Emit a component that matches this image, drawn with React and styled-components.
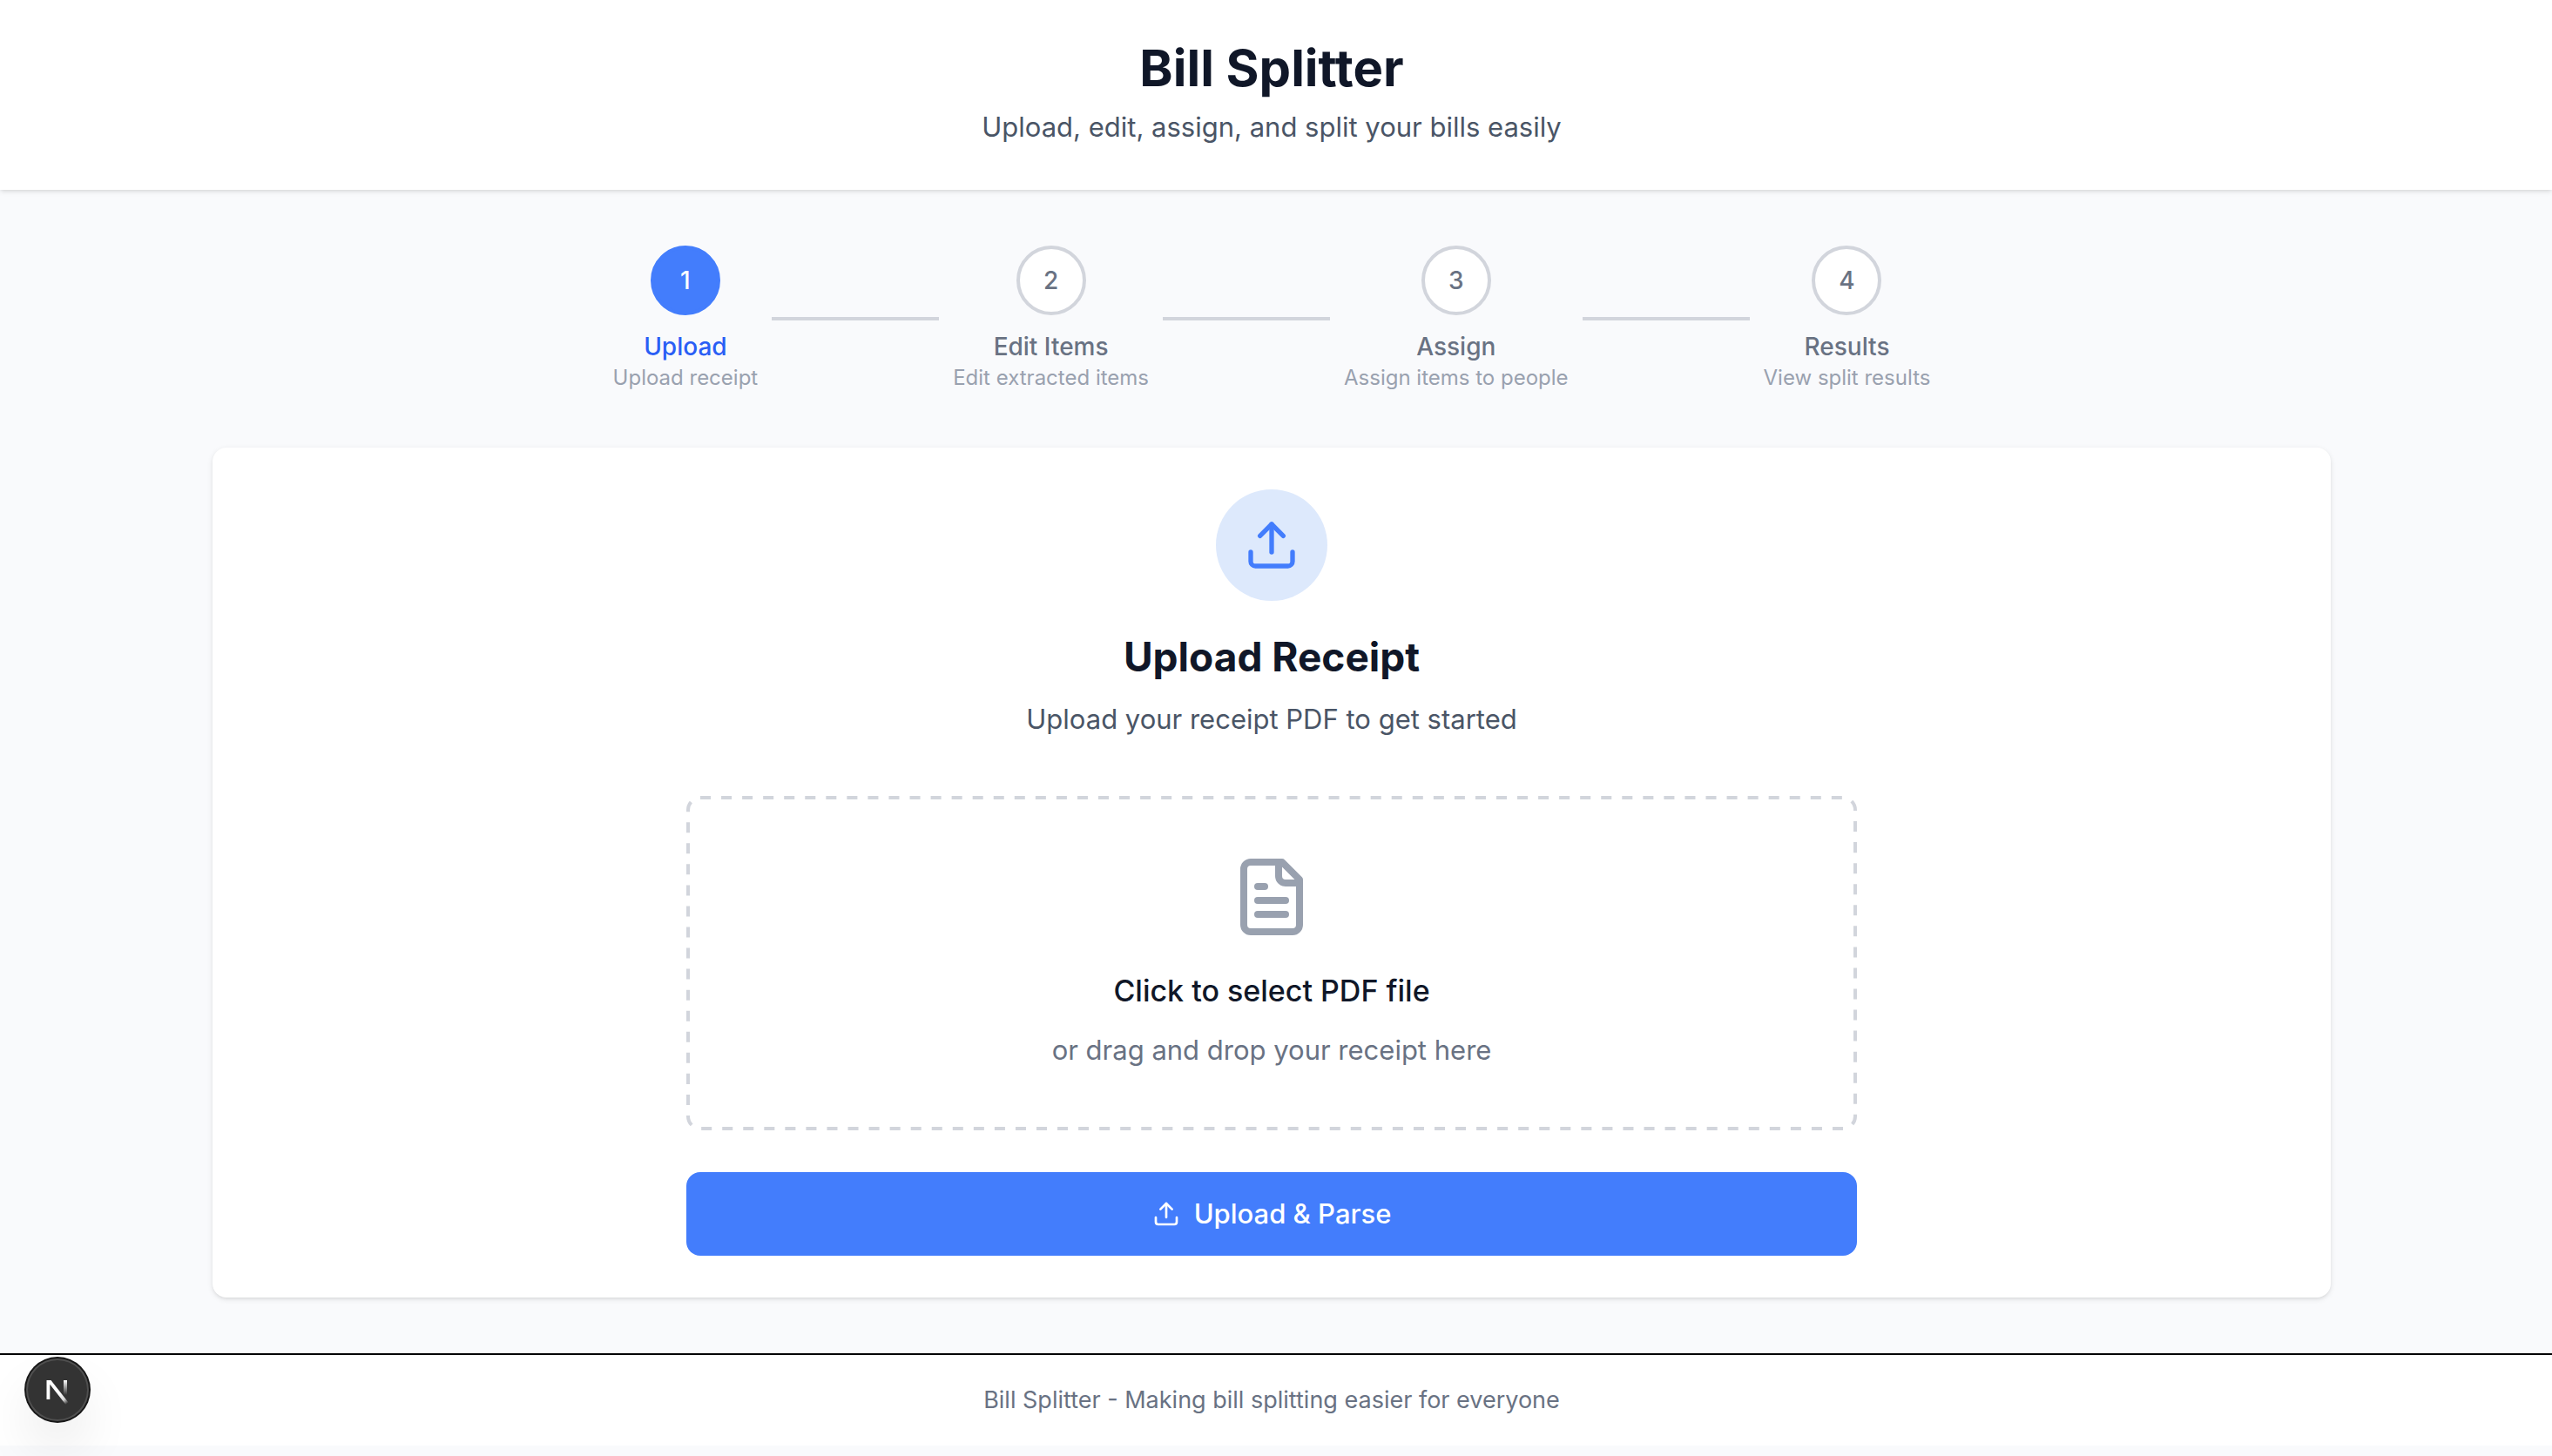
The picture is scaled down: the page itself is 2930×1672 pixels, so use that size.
import React, { useState } from "react";
import styled, { createGlobalStyle, css } from "styled-components";
import { Upload } from "lucide-react";

const color = {
  page: "#f9fafc",
  ink: "#101728",
  body: "#4a5566",
  muted: "#697283",
  faint: "#99a1af",
  line: "#d2d5dc",
  blue: "#437dfc",
  blueText: "#2a5ef5",
  blueSoft: "#dde9fc",
};

const GlobalStyle = createGlobalStyle`
  *, *::before, *::after { box-sizing: border-box; }
  html { background: ${color.page}; }
  body {
    margin: 0;
    background: ${color.page};
    color: ${color.ink};
    font-family: Inter, "Liberation Sans", sans-serif;
    font-size: 31px;
    line-height: 48px;
    -webkit-font-smoothing: antialiased;
  }
  h1, h2, p, ol { margin: 0; padding: 0; }
`;

const band = css`
  padding-right: 10px;
`;

const Header = styled.header`
  ${band}
  padding-top: 42px;
  padding-bottom: 48px;
  background: #fff;
  box-shadow: 0 2px 6px rgba(0, 0, 0, 0.1), 0 2px 4px -2px rgba(0, 0, 0, 0.1);
  text-align: center;
`;

const Title = styled.h1`
  font-size: 58px;
  line-height: 72px;
  font-weight: 700;
  margin-bottom: 8px;
`;

const Lead = styled.p`
  color: ${(p) => p.$color || color.body};
`;

const Main = styled.main`
  ${band}
  padding-top: 64px;
  padding-bottom: 64px;
`;

const Container = styled.div`
  max-width: 2560px;
  margin: 0 auto;
  padding: 0 64px;
`;

const Steps = styled.ol`
  display: flex;
  justify-content: center;
  align-items: center;
  list-style: none;
  margin-bottom: 64px;
`;

const Step = styled.li`
  display: flex;
  align-items: center;

  & + &::before {
    content: "";
    width: 192px;
    height: 4px;
    margin: 0 16px;
    background: ${color.line};
  }
`;

const StepBody = styled.div`
  display: flex;
  flex-direction: column;
  align-items: center;
`;

const StepCircle = styled.span`
  display: flex;
  align-items: center;
  justify-content: center;
  width: 80px;
  height: 80px;
  margin-bottom: 16px;
  border: 4px solid ${(p) => (p.$active ? color.blue : color.line)};
  border-radius: 50%;
  background: ${(p) => (p.$active ? color.blue : "#fff")};
  color: ${(p) => (p.$active ? "#fff" : color.muted)};
  font-size: 28px;
  line-height: 40px;
  font-weight: 500;
`;

const StepName = styled.span`
  color: ${(p) => (p.$active ? color.blueText : color.muted)};
  font-size: 28px;
  line-height: 40px;
  font-weight: 500;
`;

const StepNote = styled.span`
  color: ${color.faint};
  font-size: 24px;
  line-height: 32px;
`;

const Card = styled.section`
  padding: 48px;
  border-radius: 16px;
  background: #fff;
  box-shadow: 0 2px 6px rgba(0, 0, 0, 0.1), 0 2px 4px -2px rgba(0, 0, 0, 0.1);
`;

const Intro = styled.div`
  display: flex;
  flex-direction: column;
  align-items: center;
  margin-bottom: 64px;
  text-align: center;
`;

const IconDisc = styled.div`
  display: flex;
  align-items: center;
  justify-content: center;
  width: 128px;
  height: 128px;
  margin-bottom: 32px;
  border-radius: 50%;
  background: ${color.blueSoft};
  color: ${color.blue};
`;

const Heading = styled.h2`
  margin-bottom: 16px;
  font-size: 46px;
  line-height: 64px;
  font-weight: 700;
`;

const Form = styled.form`
  display: flex;
  flex-direction: column;
  gap: 48px;
  max-width: 1344px;
  margin: 0 auto;
`;

const DropZone = styled.label`
  position: relative;
  display: flex;
  flex-direction: column;
  align-items: center;
  padding: 68px;
  border-radius: 16px;
  text-align: center;
  cursor: pointer;
`;

/* Dashed outline drawn over the zone's edge: dashes three strokes long. */
const DashedOutline = styled.svg`
  position: absolute;
  inset: 0;
  width: 100%;
  height: 100%;
  pointer-events: none;

  rect {
    width: calc(100% - 4px);
    height: calc(100% - 4px);
    fill: none;
    stroke: ${color.line};
    stroke-width: 4px;
  }
`;

const FileInput = styled.input`
  position: absolute;
  width: 1px;
  height: 1px;
  overflow: hidden;
  opacity: 0;
`;

const DropTitle = styled.span`
  margin: 32px 0 16px;
  font-size: 34px;
  line-height: 56px;
  font-weight: 500;
`;

const DropHint = styled.span`
  color: ${color.muted};
`;

const SubmitButton = styled.button`
  display: flex;
  align-items: center;
  justify-content: center;
  gap: 16px;
  padding: 24px 48px;
  border: 0;
  border-radius: 16px;
  background: ${color.blue};
  color: #fff;
  font: inherit;
  font-weight: 500;
  cursor: pointer;
`;

const Footer = styled.footer`
  ${band}
  padding-top: 32px;
  padding-bottom: 32px;
  border-top: 2px solid #000;
  background: #fff;
  color: ${color.muted};
  font-size: 27px;
  line-height: 40px;
  text-align: center;
`;

const DevBadge = styled.button`
  position: fixed;
  left: 30px;
  bottom: 40px;
  width: 72px;
  height: 72px;
  padding: 0;
  border: 0;
  border-radius: 50%;
  background: #333;
  box-shadow: 0 0 0 2px #171717, inset 0 0 0 2px rgba(255, 255, 255, 0.14),
    0 32px 64px -16px rgba(0, 0, 0, 0.24);
  cursor: pointer;

  svg {
    display: block;
  }
`;

const steps = [
  { name: "Upload", note: "Upload receipt" },
  { name: "Edit Items", note: "Edit extracted items" },
  { name: "Assign", note: "Assign items to people" },
  { name: "Results", note: "View split results" },
];

function DocumentIcon() {
  return (
    <svg width="96" height="96" viewBox="0 0 24 24" fill="none" stroke={color.faint}
      strokeWidth="2" strokeLinecap="round" strokeLinejoin="round" aria-hidden="true">
      <path d="M15 2H6a2 2 0 0 0-2 2v16a2 2 0 0 0 2 2h12a2 2 0 0 0 2-2V7Z" />
      <path d="M14 2v4a2 2 0 0 0 2 2h4" />
      <path d="M10 9H8" />
      <path d="M16 13H8" />
      <path d="M16 17H8" />
    </svg>
  );
}

function NextLogo() {
  return (
    <svg width="72" height="72" viewBox="0 0 72 72" aria-hidden="true">
      <defs>
        <linearGradient id="diagonal" gradientUnits="userSpaceOnUse" x1="38" y1="40" x2="47" y2="52">
          <stop stopColor="#fff" />
          <stop offset="0.6" stopColor="#fff" stopOpacity="0.8" />
          <stop offset="1" stopColor="#fff" stopOpacity="0" />
        </linearGradient>
        <linearGradient id="stem" gradientUnits="userSpaceOnUse" x1="45" y1="25" x2="45" y2="42">
          <stop stopColor="#fff" />
          <stop offset="1" stopColor="#fff" stopOpacity="0" />
        </linearGradient>
      </defs>
      <path d="M23.5 25H28.5L48.5 50.5L45.5 53L27.3 29.8V47H23.5Z" fill="url(#diagonal)" />
      <path d="M43 25H47V42H43Z" fill="url(#stem)" />
    </svg>
  );
}

export default function App() {
  const [current] = useState(0);

  return (
    <>
      <GlobalStyle />
      <Header>
        <Title>Bill Splitter</Title>
        <Lead>Upload, edit, assign, and split your bills easily</Lead>
      </Header>

      <Main>
        <Container>
          <Steps>
            {steps.map((step, i) => (
              <Step key={step.name} aria-current={i === current ? "step" : undefined}>
                <StepBody>
                  <StepCircle $active={i === current}>{i + 1}</StepCircle>
                  <StepName $active={i === current}>{step.name}</StepName>
                  <StepNote>{step.note}</StepNote>
                </StepBody>
              </Step>
            ))}
          </Steps>

          <Card>
            <Intro>
              <IconDisc>
                <Upload size={64} />
              </IconDisc>
              <Heading>Upload Receipt</Heading>
              <Lead>Upload your receipt PDF to get started</Lead>
            </Intro>

            <Form onSubmit={(e) => e.preventDefault()}>
              <DropZone htmlFor="receipt">
                <DashedOutline aria-hidden="true">
                  <rect x="2" y="2" rx="14" strokeDasharray="12 12" pathLength="3408" />
                </DashedOutline>
                <FileInput id="receipt" type="file" accept="application/pdf" />
                <DocumentIcon />
                <DropTitle>Click to select PDF file</DropTitle>
                <DropHint>or drag and drop your receipt here</DropHint>
              </DropZone>
              <SubmitButton type="submit">
                <Upload size={32} />
                Upload &amp; Parse
              </SubmitButton>
            </Form>
          </Card>
        </Container>
      </Main>

      <Footer>
        <p>Bill Splitter - Making bill splitting easier for everyone</p>
      </Footer>

      <DevBadge type="button" aria-label="Open Next.js Dev Tools">
        <NextLogo />
      </DevBadge>
    </>
  );
}
